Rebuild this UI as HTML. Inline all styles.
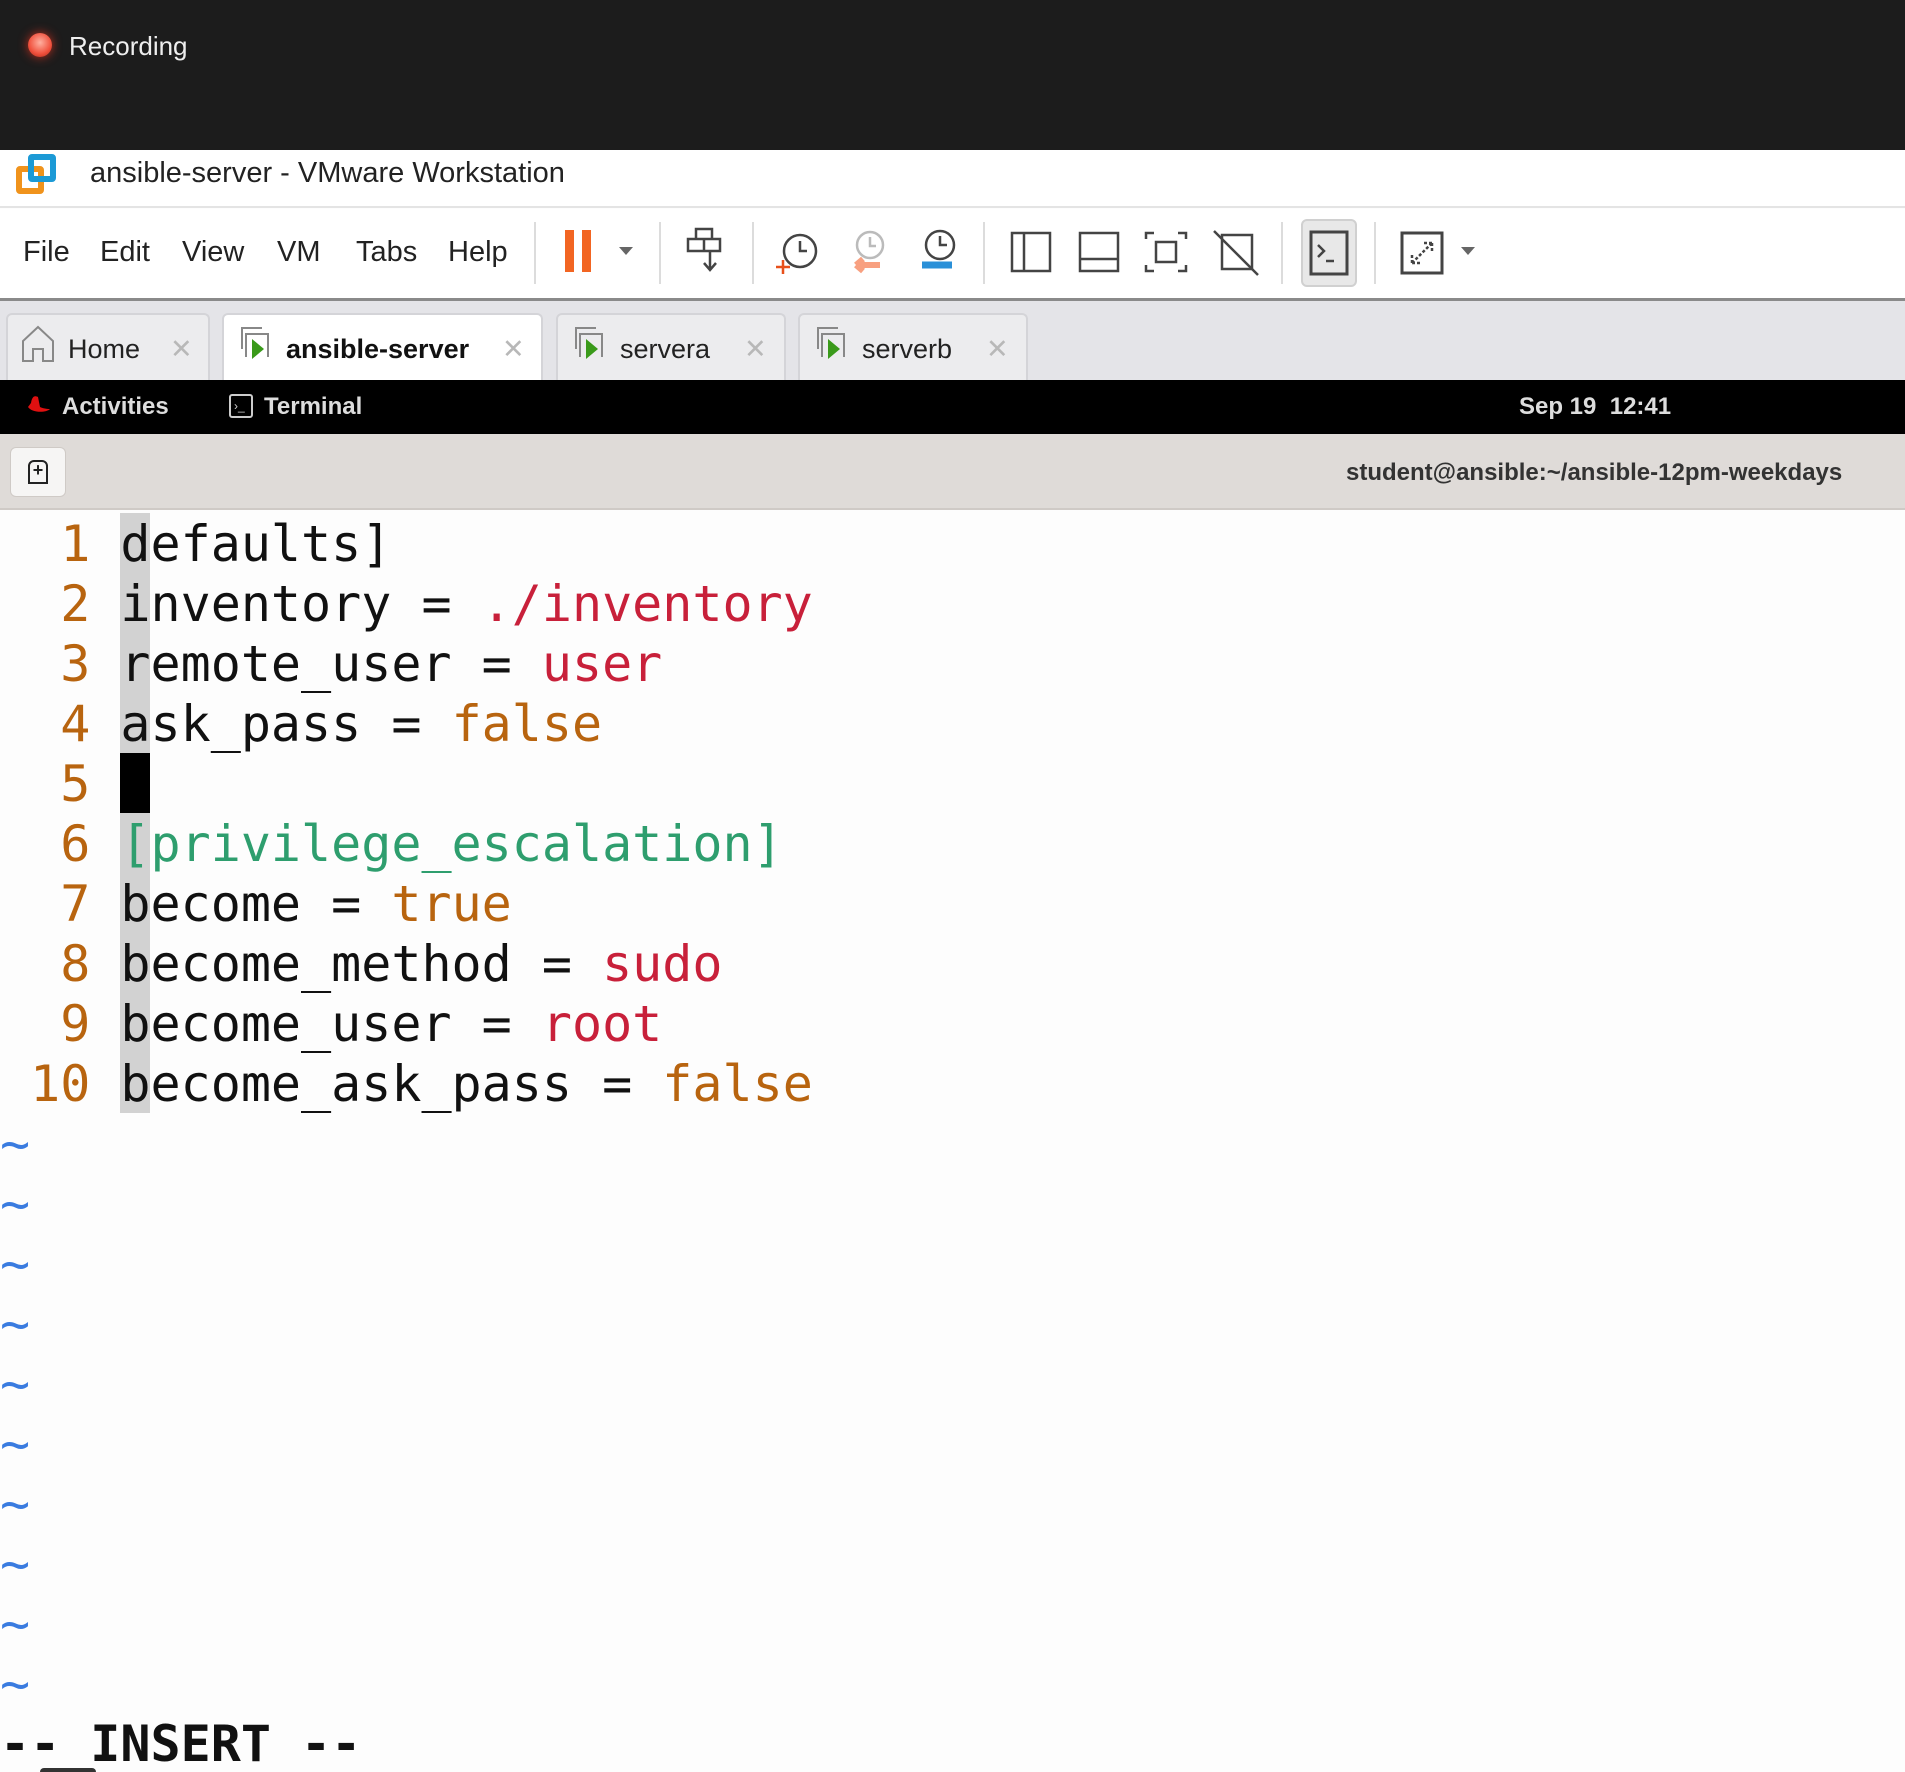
<!DOCTYPE html>
<html style="width:1905px;height:1772px;overflow:hidden"><head><meta charset="utf-8"><style>
*{margin:0;padding:0;box-sizing:border-box}
body{width:1905px;height:1772px;background:#fdfdfd;position:relative;overflow:hidden;font-family:"Liberation Sans","DejaVu Sans",sans-serif}
.a{position:absolute}
.sep{position:absolute;top:222px;width:2px;height:62px;background:#dcdcdc}
.tab{position:absolute;top:313px;height:67px;background:#ececee;border:2px solid #d4d4d8;border-bottom:none;border-radius:6px 6px 0 0}
.tab span{position:absolute;top:19px;font-size:27px;color:#222}
.x{position:absolute;top:14px;font-size:30px;color:#b8b8b8 !important;font-weight:300}
.ed{position:absolute;left:0;top:514px;font-family:"DejaVu Sans Mono","Liberation Mono",monospace;font-size:50px;line-height:60px;white-space:pre;color:#111}
.n{color:#b8640f}.r{color:#c8203a}.o{color:#b8640f}.g{color:#2e9e6e}.t{color:#3a7ce0}
</style></head><body>
<div class="a" style="left:0;top:0;width:1905px;height:150px;background:#1c1c1c"></div>
<div class="a" style="left:28px;top:33px;width:24px;height:24px;border-radius:50%;background:radial-gradient(circle at 50% 40%,#ffb0a0,#f0503c 60%,#a02818);box-shadow:0 0 10px #c03020"></div>
<div class="a" style="left:69px;top:31px;font-size:26px;color:#eee">Recording</div>

<div class="a" style="left:0;top:150px;width:1905px;height:58px;background:#fff;border-bottom:2px solid #e4e4e4"></div>
<div class="a" style="left:16px;top:166px;width:28px;height:28px;border:6px solid #f0931c;border-radius:4px"></div>
<div class="a" style="left:28px;top:154px;width:28px;height:28px;border:6px solid #1c9ad6;border-radius:4px"></div>
<div class="a" style="left:90px;top:157px;font-size:29px;color:#222">ansible-server - VMware Workstation</div>

<div class="a" style="left:0;top:209px;width:1905px;height:89px;background:#fff"></div>
<div class="a" style="left:0;top:298px;width:1905px;height:3px;background:#8a8a8a"></div>
<div class="a" style="top:236px;left:23px;font-size:29px;color:#222">File</div>
<div class="a" style="top:236px;left:100px;font-size:29px;color:#222">Edit</div>
<div class="a" style="top:236px;left:182px;font-size:29px;color:#222">View</div>
<div class="a" style="top:236px;left:277px;font-size:29px;color:#222">VM</div>
<div class="a" style="top:236px;left:356px;font-size:29px;color:#222">Tabs</div>
<div class="a" style="top:236px;left:448px;font-size:29px;color:#222">Help</div>
<div class="sep" style="left:534px"></div><div class="sep" style="left:659px"></div><div class="sep" style="left:752px"></div><div class="sep" style="left:983px"></div><div class="sep" style="left:1281px"></div><div class="sep" style="left:1374px"></div>
<div class="a" style="left:1301px;top:219px;width:56px;height:68px;background:#e8e8e8;border:2px solid #d0d0d0;border-radius:6px"></div>
<svg class="a" style="left:0;top:209px" width="1905" height="89" fill="none" stroke="#444" stroke-width="2.5">
<rect x="565" y="21" width="9" height="42" fill="#f26522" stroke="none"/><rect x="582" y="21" width="9" height="42" fill="#f26522" stroke="none"/>
<path d="M619 38h14l-7 8z M1461 38h14l-7 8z" fill="#666" stroke="none"/>
<path d="M696 20h16v10h-16z M688 30h32v12h-32z M704 30v12 M710 42v18 M704 54l6 7 6-7"/>
<circle cx="800" cy="42" r="16"/><path d="M800 32v10h7"/><path d="M783 51v14 M776 58h14" stroke="#e8501a"/>
<circle cx="870" cy="36" r="13" stroke="#bbb"/><path d="M870 28v9h6" stroke="#bbb"/><path d="M856 56h24 M856 56l7-6 M856 56l7 6" stroke="#f8a080" stroke-width="6"/>
<circle cx="940" cy="36" r="14"/><path d="M940 27v9h7"/><path d="M922 56h30" stroke="#2a90d8" stroke-width="7"/>
<rect x="1012" y="24" width="38" height="38"/><path d="M1024 24v38"/>
<rect x="1080" y="24" width="38" height="38"/><path d="M1080 50h38"/>
<path d="M1146 30v-6h8 M1178 24h8v6 M1186 56v6h-8 M1154 62h-8v-6"/><rect x="1156" y="33" width="20" height="20"/>
<rect x="1222" y="26" width="30" height="34"/><path d="M1214 22l44 44"/>
<rect x="1311" y="23" width="36" height="42" stroke-width="3"/><path d="M1318 36l6 6-6 6 M1326 52h8"/>
<rect x="1402" y="24" width="40" height="40" stroke-width="3"/><path d="M1412 54l20-20 M1412 54v-8 M1412 54h8 M1432 34h-8 M1432 34v8" stroke-dasharray="3 2"/>
</svg>

<div class="a" style="left:0;top:301px;width:1905px;height:79px;background:#e4e4e8"></div>
<div class="tab" style="left:6px;width:204px"><span style="left:60px">Home</span><span class="x" style="left:162px">✕</span></div>
<div class="tab" style="left:222px;width:321px;background:#fff"><span style="left:62px;font-weight:bold;color:#111">ansible-server</span><span class="x" style="left:278px">✕</span></div>
<div class="tab" style="left:556px;width:230px"><span style="left:62px">servera</span><span class="x" style="left:186px">✕</span></div>
<div class="tab" style="left:798px;width:230px"><span style="left:62px">serverb</span><span class="x" style="left:186px">✕</span></div>
<svg class="a" style="left:0;top:313px" width="1100" height="67" fill="none" stroke="#888" stroke-width="2">
<path d="M23 48v-20l15-14 15 14v20h-10v-12h-10v12z"/>
<path d="M242 36v-21h20 M246 44v-23h22v23"/><path d="M252 26v20l12-10z" fill="#3a9a1a" stroke="none"/>
<path d="M576 36v-21h20 M580 44v-23h22v23"/><path d="M586 26v20l12-10z" fill="#3a9a1a" stroke="none"/>
<path d="M818 36v-21h20 M822 44v-23h22v23"/><path d="M828 26v20l12-10z" fill="#3a9a1a" stroke="none"/>
</svg>

<div class="a" style="left:0;top:380px;width:1905px;height:54px;background:#000"></div>
<svg class="a" style="left:26px;top:393px" width="26" height="22"><path d="M2 14c4 6 18 6 22 2-4 0-8-1-10-2l-2-10c-4-2-6 0-7 6z" fill="#e01010"/></svg>
<div class="a" style="left:62px;top:393px;font-size:24px;font-weight:bold;color:#ddd">Activities</div>
<div class="a" style="left:229px;top:394px;width:24px;height:24px;border:2px solid #ccc;border-radius:3px;color:#ccc;font-size:12px;line-height:20px;padding-left:3px">›_</div>
<div class="a" style="left:264px;top:393px;font-size:24px;font-weight:bold;color:#ddd">Terminal</div>
<div class="a" style="left:1519px;top:393px;font-size:24px;font-weight:bold;color:#ddd">Sep 19&nbsp;&nbsp;12:41</div>

<div class="a" style="left:0;top:434px;width:1905px;height:76px;background:#dfdbd8;border-bottom:2px solid #cfcac6"></div>
<div class="a" style="left:10px;top:447px;width:56px;height:50px;background:#f6f5f4;border:1px solid #cfcac6;border-radius:6px"></div>
<div class="a" style="left:28px;top:460px;width:20px;height:24px;border:2.5px solid #222;border-radius:6px 6px 0 0;font-size:18px;font-weight:bold;line-height:16px;text-align:center;color:#222">+</div>
<div class="a" style="left:1346px;top:459px;font-size:24px;font-weight:bold;color:#333">student@ansible:~/ansible-12pm-weekdays</div>

<div class="a" style="left:120px;top:513px;width:30px;height:600px;background:#d2d2d2"></div>
<div class="a" style="left:120px;top:753px;width:30px;height:60px;background:#000"></div>
<div class="ed"><span class="n">  1 </span>defaults]
<span class="n">  2 </span>inventory = <span class="r">./inventory</span>
<span class="n">  3 </span>remote_user = <span class="r">user</span>
<span class="n">  4 </span>ask_pass = <span class="o">false</span>
<span class="n">  5 </span>
<span class="n">  6 </span><span class="g">[privilege_escalation]</span>
<span class="n">  7 </span>become = <span class="o">true</span>
<span class="n">  8 </span>become_method = <span class="r">sudo</span>
<span class="n">  9 </span>become_user = <span class="r">root</span>
<span class="n"> 10 </span>become_ask_pass = <span class="o">false</span>
<span class="t">~</span>
<span class="t">~</span>
<span class="t">~</span>
<span class="t">~</span>
<span class="t">~</span>
<span class="t">~</span>
<span class="t">~</span>
<span class="t">~</span>
<span class="t">~</span>
<span class="t">~</span>
<b>-- INSERT --</b></div>
<div class="a" style="left:40px;top:1768px;width:56px;height:4px;border-radius:28px 28px 0 0;background:#333"></div>
</body></html>
